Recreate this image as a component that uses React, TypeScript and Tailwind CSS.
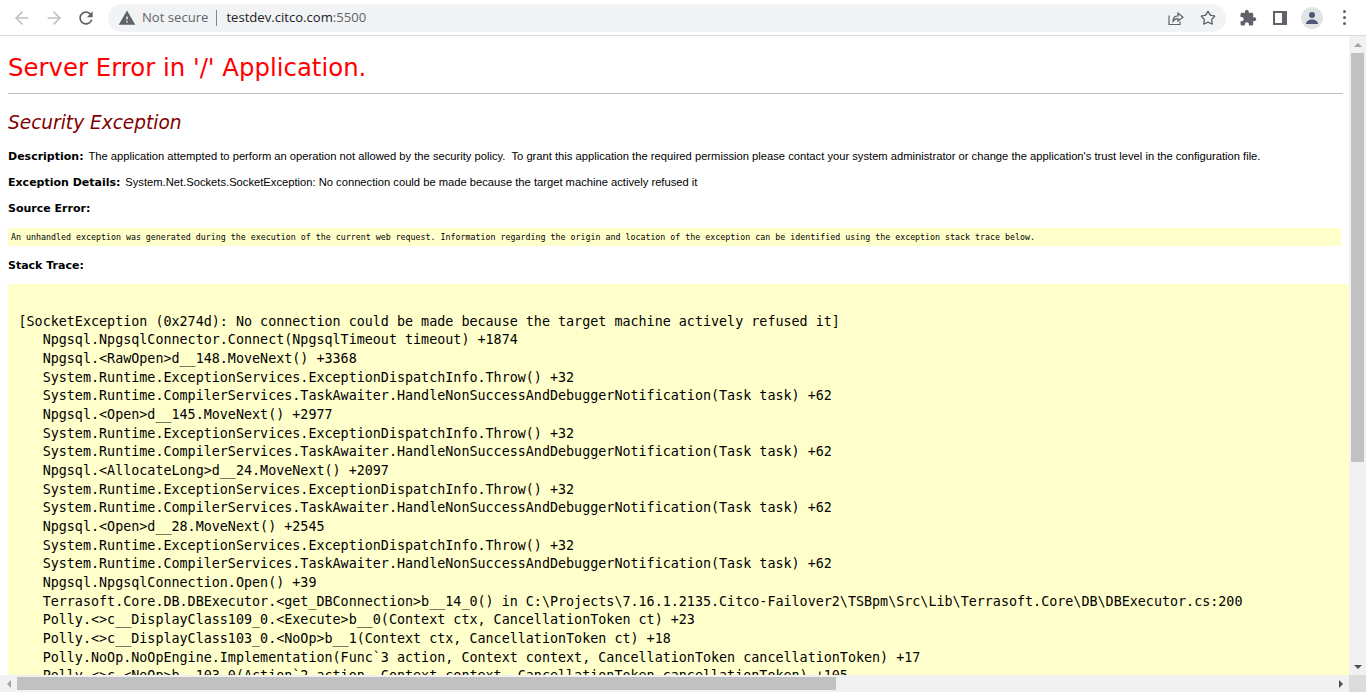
import { ArrowLeft, ArrowRight, Star } from "lucide-react";

const stack = [
  "[SocketException (0x274d): No connection could be made because the target machine actively refused it]",
  "   Npgsql.NpgsqlConnector.Connect(NpgsqlTimeout timeout) +1874",
  "   Npgsql.<RawOpen>d__148.MoveNext() +3368",
  "   System.Runtime.ExceptionServices.ExceptionDispatchInfo.Throw() +32",
  "   System.Runtime.CompilerServices.TaskAwaiter.HandleNonSuccessAndDebuggerNotification(Task task) +62",
  "   Npgsql.<Open>d__145.MoveNext() +2977",
  "   System.Runtime.ExceptionServices.ExceptionDispatchInfo.Throw() +32",
  "   System.Runtime.CompilerServices.TaskAwaiter.HandleNonSuccessAndDebuggerNotification(Task task) +62",
  "   Npgsql.<AllocateLong>d__24.MoveNext() +2097",
  "   System.Runtime.ExceptionServices.ExceptionDispatchInfo.Throw() +32",
  "   System.Runtime.CompilerServices.TaskAwaiter.HandleNonSuccessAndDebuggerNotification(Task task) +62",
  "   Npgsql.<Open>d__28.MoveNext() +2545",
  "   System.Runtime.ExceptionServices.ExceptionDispatchInfo.Throw() +32",
  "   System.Runtime.CompilerServices.TaskAwaiter.HandleNonSuccessAndDebuggerNotification(Task task) +62",
  "   Npgsql.NpgsqlConnection.Open() +39",
  "   Terrasoft.Core.DB.DBExecutor.<get_DBConnection>b__14_0() in C:\\Projects\\7.16.1.2135.Citco-Failover2\\TSBpm\\Src\\Lib\\Terrasoft.Core\\DB\\DBExecutor.cs:200",
  "   Polly.<>c__DisplayClass109_0.<Execute>b__0(Context ctx, CancellationToken ct) +23",
  "   Polly.<>c__DisplayClass103_0.<NoOp>b__1(Context ctx, CancellationToken ct) +18",
  "   Polly.NoOp.NoOpEngine.Implementation(Func`3 action, Context context, CancellationToken cancellationToken) +17",
  "   Polly.<>c.<NoOp>b__103_0(Action`2 action, Context context, CancellationToken cancellationToken) +105",
];

function Toolbar() {
  return (
    <div className="flex h-9 shrink-0 items-center border-b border-[#dadce0] bg-white pr-[6px] pl-[6px]">
      <div className="flex w-8 justify-center text-[#bdc1c6]">
        <ArrowLeft size={20} strokeWidth={2} />
      </div>
      <div className="flex w-8 justify-center text-[#bdc1c6]">
        <ArrowRight size={20} strokeWidth={2} />
      </div>
      <div className="flex w-8 justify-center text-[#5f6368]">
        <svg width="20" height="20" viewBox="0 0 24 24" fill="currentColor">
          <path d="M17.65 6.35C16.2 4.9 14.21 4 12 4c-4.42 0-7.99 3.58-7.99 8s3.57 8 7.99 8c3.73 0 6.84-2.55 7.73-6h-2.08c-.82 2.33-3.04 4-5.65 4-3.31 0-6-2.69-6-6s2.69-6 6-6c1.66 0 3.14.69 4.22 1.78L13 11h7V4l-2.35 2.35z" />
        </svg>
      </div>
      <div className="ml-[6px] flex h-7 w-[1118px] items-center rounded-full bg-[#f1f3f4] pr-[9px] pl-[10px]">
        <svg width="18" height="18" viewBox="0 0 24 24" fill="#5f6368">
          <path d="M1 21h22L12 2 1 21zm12-3h-2v-2h2v2zm0-4h-2v-4h2v4z" />
        </svg>
        <span className="ml-[6px] font-['Open_Sans',sans-serif] text-[13.1px] text-[#5f6368]">Not secure</span>
        <div className="mx-[8px] h-4 w-px bg-[#80868b]" />
        <span className="ml-[1px] font-['Open_Sans',sans-serif] text-[13.1px] text-[#202124]">
          testdev.citco.com<span className="text-[#5f6368]">:5500</span>
        </span>
        <div className="ml-auto flex items-center">
          <svg width="18" height="18" viewBox="0 0 18 18" fill="none" stroke="#5f6368" strokeWidth="1.2">
            <path d="M2 6.5V15.5H13V12.5" />
            <path d="M6 12.5C6 9 8 6.8 11 6.8V4L16 8.2L11 12V9.6C9 9.6 7.2 10.6 6 12.5Z" />
          </svg>
          <div className="mr-[1px] ml-[15px] text-[#5f6368]">
            <Star size={16} strokeWidth={2} />
          </div>
        </div>
      </div>
      <div className="ml-[6px] flex w-8 justify-center text-[#5f6368]">
        <svg width="18" height="18" viewBox="0 0 24 24" fill="currentColor">
          <path d="M20.5 11H19V7c0-1.1-.9-2-2-2h-4V3.5C13 2.12 11.88 1 10.5 1S8 2.12 8 3.5V5H4c-1.1 0-1.99.9-1.99 2v3.8H3.5c1.49 0 2.7 1.21 2.7 2.7s-1.21 2.7-2.7 2.7H2V20c0 1.1.9 2 2 2h3.8v-1.5c0-1.49 1.21-2.7 2.7-2.7 1.49 0 2.7 1.21 2.7 2.7V22H17c1.1 0 2-.9 2-2v-4h1.5c1.38 0 2.5-1.12 2.5-2.5S21.88 11 20.5 11z" />
        </svg>
      </div>
      <div className="flex w-8 justify-center">
        <div className="flex h-[14px] w-[14px] justify-start bg-[#5f6368] p-[2px] pr-[5px]">
          <div className="h-full w-full bg-white" />
        </div>
      </div>
      <div className="flex w-8 justify-center">
        <div className="flex h-[22px] w-[22px] items-center justify-center rounded-full bg-[#e1e3e6]">
          <svg width="16" height="16" viewBox="0 0 16 16" fill="#4d5a73">
            <circle cx="8" cy="5" r="3" />
            <path d="M2 14c0-2.8 3-4.4 6-4.4s6 1.6 6 4.4z" />
          </svg>
        </div>
      </div>
      <div className="flex w-8 flex-col items-center gap-[3px]">
        <div className="h-[3px] w-[3px] rounded-full bg-[#5f6368]" />
        <div className="h-[3px] w-[3px] rounded-full bg-[#5f6368]" />
        <div className="h-[3px] w-[3px] rounded-full bg-[#5f6368]" />
      </div>
    </div>
  );
}

function VerticalScrollbar() {
  return (
    <div className="flex w-[17px] shrink-0 flex-col items-center bg-[#f1f1f1]">
      <div className="flex h-[17px] items-center justify-center">
        <div className="h-0 w-0 border-x-[4px] border-b-[4px] border-x-transparent border-b-[#a3a3a3]" />
      </div>
      <div className="h-[409px] w-[13px] bg-[#c1c1c1]" />
      <div className="mt-auto flex h-[17px] items-center justify-center">
        <div className="h-0 w-0 border-x-[4px] border-t-[4px] border-x-transparent border-t-[#505050]" />
      </div>
    </div>
  );
}

function HorizontalScrollbar() {
  return (
    <div className="flex h-[17px] shrink-0 items-center bg-[#f1f1f1]">
      <div className="flex w-[17px] justify-center">
        <div className="h-0 w-0 border-y-[4px] border-r-[4px] border-y-transparent border-r-[#a3a3a3]" />
      </div>
      <div className="h-[13px] w-[819px] bg-[#c1c1c1]" />
      <div className="ml-auto flex w-[17px] justify-center">
        <div className="h-0 w-0 border-y-[4px] border-l-[4px] border-y-transparent border-l-[#505050]" />
      </div>
      <div className="h-[17px] w-[17px] bg-[#dcdcdc]" />
    </div>
  );
}

export default function App() {
  return (
    <div className="flex h-[692px] w-[1366px] flex-col overflow-hidden bg-white text-black">
      <Toolbar />
      <div className="flex min-h-0 flex-1">
        <div className="min-w-0 flex-1 overflow-hidden pt-[15px] pl-2 font-['DejaVu_Sans',sans-serif]">
          <h1 className="text-[24.4px] leading-[34px] text-[#ff0000]">Server Error in '/' Application.</h1>
          <div className="mt-[8px] h-px w-[1335px] bg-[#c0c0c0]" />
          <h2 className="mt-[16px] text-[18.55px] leading-[26px] text-[#800000] italic">Security Exception</h2>
          <p className="mt-[13px] text-[11px] leading-[14px] whitespace-pre">
            <b>Description: </b>
            <span className="ml-[1px] font-['Liberation_Sans',sans-serif] text-[11.2px]">
              The application attempted to perform an operation not allowed by the security policy.  To grant this application the required permission please contact your system administrator or change the application's trust level in the configuration file.
            </span>
          </p>
          <p className="mt-[11px] text-[11px] leading-[14px] whitespace-pre">
            <b>Exception Details: </b>
            <span className="ml-[1px] font-['Liberation_Sans',sans-serif] text-[11.2px]">
              System.Net.Sockets.SocketException: No connection could be made because the target machine actively refused it
            </span>
          </p>
          <p className="mt-[12px] text-[11px] leading-[14px] font-bold">Source Error:</p>
          <div className="mt-[12px] flex h-[18px] w-[1333px] items-center bg-[#ffffcc] pl-[3px] font-['DejaVu_Sans_Mono',monospace] text-[8.31px] whitespace-pre">
            An unhandled exception was generated during the execution of the current web request. Information regarding the origin and location of the exception can be identified using the exception stack trace below.
          </div>
          <p className="mt-[13px] text-[11px] leading-[14px] font-bold">Stack Trace:</p>
          <pre className="mt-[11px] bg-[#ffffcc] pt-[28.7px] pl-[10.5px] font-['DejaVu_Sans_Mono',monospace] text-[13.39px] leading-[18.667px]">
            {stack.join("\n")}
          </pre>
        </div>
        <VerticalScrollbar />
      </div>
      <HorizontalScrollbar />
    </div>
  );
}
